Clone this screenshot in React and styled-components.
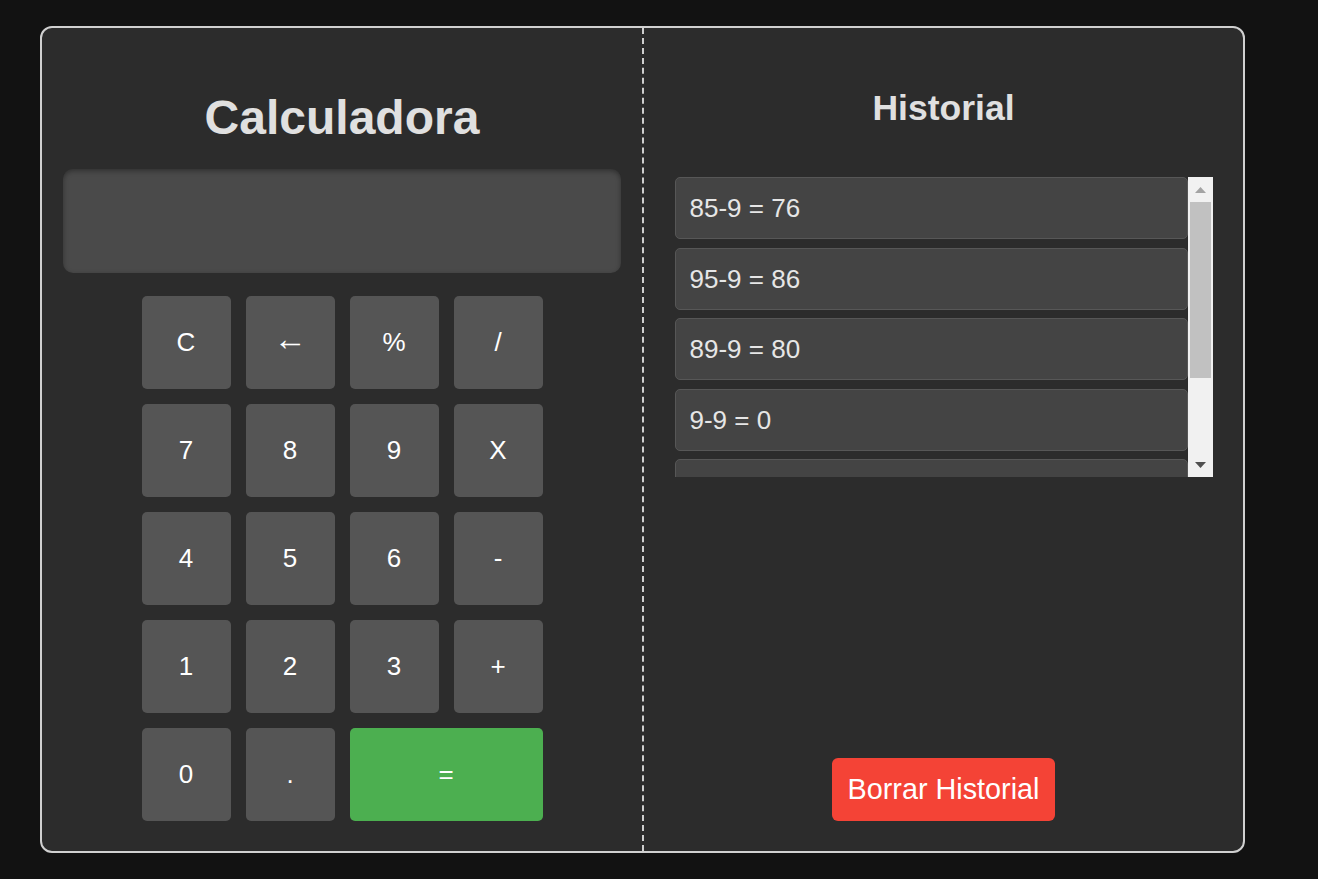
import React from 'react'
import styled, { createGlobalStyle } from 'styled-components'

const GlobalStyle = createGlobalStyle`
  html, body {
    margin: 0;
    padding: 0;
    background: #121212;
    font-family: "Liberation Sans", Arial, sans-serif;
  }
`;

const Page = styled.div`
  width: 1318px;
  height: 879px;
  padding: 26px 0 0 40px;
  box-sizing: border-box;
  background: #121212;
`;

const Container = styled.div`
  width: 1205px;
  height: 827px;
  box-sizing: border-box;
  border: 2px solid #d0d0d0;
  border-radius: 12px;
  background: #2c2c2c;
  display: flex;
  overflow: hidden;
`;

const CalcPanel = styled.div`
  flex: 0 0 602px;
  box-sizing: border-box;
  border-right: 2px dashed #cfcfcf;
  padding: 0 21px 30px;
  display: flex;
  flex-direction: column;
  align-items: center;
`;

const Title = styled.h1`
  margin: 62px 0 23px;
  font-size: 48px;
  line-height: 56px;
  font-weight: bold;
  color: #e0e0e0;
  text-align: center;
`;

const Display = styled.div`
  width: 100%;
  height: 104px;
  flex-shrink: 0;
  background: #4a4a4a;
  border-radius: 10px;
  box-shadow: inset 0 2px 5px rgba(0, 0, 0, 0.35);
  margin-bottom: 23px;
`;

const Keys = styled.div`
  display: grid;
  grid-template-columns: repeat(4, 89px);
  grid-auto-rows: 93px;
  gap: 15px;
`;

const Key = styled.button`
  grid-column: span ${props => props.span || 1};
  border: none;
  border-radius: 5px;
  background: ${props => (props.equals ? '#4caf50' : '#555555')};
  color: #ffffff;
  font-family: "Liberation Sans", "DejaVu Sans", Arial, sans-serif;
  font-size: ${props => props.size || 26}px;
  cursor: pointer;
  padding: 0 0 ${props => props.lift || 0}px;
`;

const HistoryPanel = styled.div`
  flex: 1;
  box-sizing: border-box;
  padding: 0 0 30px;
  display: flex;
  flex-direction: column;
  align-items: center;
`;

const SubTitle = styled.h2`
  margin: 60px 0 48px;
  font-size: 35.5px;
  line-height: 41px;
  font-weight: bold;
  color: #e0e0e0;
`;

const HistoryBox = styled.div`
  width: 538px;
  height: 300px;
  display: flex;
`;

const List = styled.ul`
  list-style: none;
  margin: 0;
  padding: 0;
  flex: 1;
  overflow: hidden;
`;

const Entry = styled.li`
  background: #444444;
  border: 1px solid #575757;
  border-radius: 5px;
  padding: 15px 14px;
  margin-bottom: 8.5px;
  font-size: 26px;
  line-height: 30px;
  color: #e6e6e6;
`;

/* classic scrollbar look, drawn beside the list */
const ScrollTrack = styled.div`
  flex: 0 0 25px;
  background: #f1f1f1;
  display: flex;
  flex-direction: column;
  align-items: center;
`;

const ScrollArrow = styled.div`
  flex: 0 0 25px;
  width: 25px;
  display: flex;
  align-items: center;
  justify-content: center;
  padding-top: ${props => (props.down ? '0' : '1px')};
  box-sizing: border-box;
`;

const Thumb = styled.div`
  width: 21px;
  height: 176px;
  background: #c1c1c1;
`;

const Spacer = styled.div`
  flex: 1;
`;

const ClearButton = styled.button`
  margin-top: auto;
  border: none;
  border-radius: 6px;
  background: #f44336;
  color: #ffffff;
  font-family: "Liberation Sans", Arial, sans-serif;
  font-size: 28.8px;
  line-height: 33px;
  padding: 15px 15px;
  cursor: pointer;
`;

const Triangle = ({ down, color }) => (
  <svg width="11" height="6" viewBox="0 0 11 6">
    <polygon points={down ? '0,0 11,0 5.5,6' : '5.5,0 11,6 0,6'} fill={color} />
  </svg>
);

const keys = [
  { label: 'C' }, { label: '←', size: 33, lift: 7 }, { label: '%' }, { label: '/' },
  { label: '7' }, { label: '8' }, { label: '9' }, { label: 'X' },
  { label: '4' }, { label: '5' }, { label: '6' }, { label: '-' },
  { label: '1' }, { label: '2' }, { label: '3' }, { label: '+' },
  { label: '0' }, { label: '.' }, { label: '=', span: 2, equals: true },
];

const history = ['85-9 = 76', '95-9 = 86', '89-9 = 80', '9-9 = 0', '99-9 = 90', '9+9 = 18'];

const App = () => {
  return (
    <Page>
      <GlobalStyle />
      <Container>
        <CalcPanel>
          <Title>Calculadora</Title>
          <Display />
          <Keys>
            {keys.map(k => (
              <Key key={k.label} span={k.span} size={k.size} lift={k.lift} equals={k.equals ? 1 : 0}>
                {k.label}
              </Key>
            ))}
          </Keys>
        </CalcPanel>
        <HistoryPanel>
          <SubTitle>Historial</SubTitle>
          <HistoryBox>
            <List>
              {history.map(h => (
                <Entry key={h}>{h}</Entry>
              ))}
            </List>
            <ScrollTrack>
              <ScrollArrow>
                <Triangle color="#a3a3a3" />
              </ScrollArrow>
              <Thumb />
              <Spacer />
              <ScrollArrow down>
                <Triangle down color="#505050" />
              </ScrollArrow>
            </ScrollTrack>
          </HistoryBox>
          <ClearButton>Borrar Historial</ClearButton>
        </HistoryPanel>
      </Container>
    </Page>
  )
}

export default App
